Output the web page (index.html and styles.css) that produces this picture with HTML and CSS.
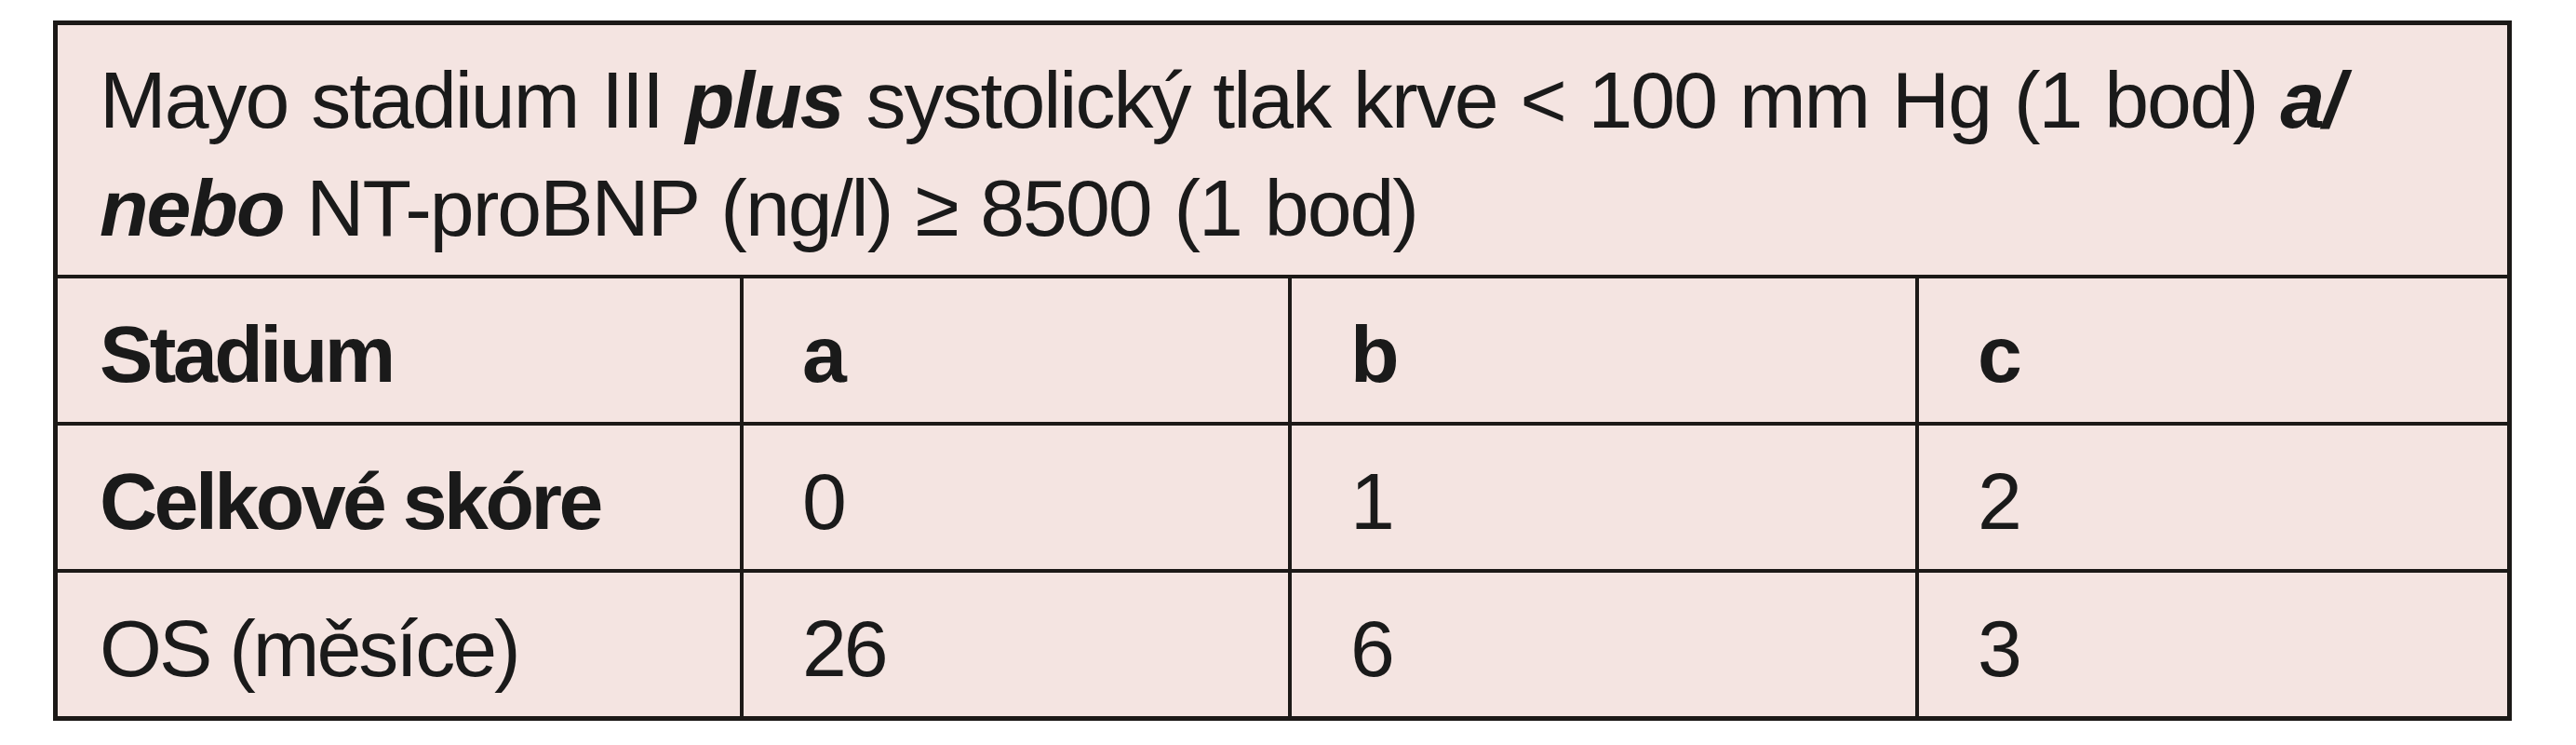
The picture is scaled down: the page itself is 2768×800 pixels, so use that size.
FILE: index.html
```html
<!DOCTYPE html>
<html lang="cs">
<head>
<meta charset="utf-8">
<title>Mayo stadium III</title>
<link rel="stylesheet" href="styles.css">
</head>
<body>
<table class="staging">
  <colgroup>
    <col class="col-label">
    <col class="col-a">
    <col class="col-b">
    <col class="col-c">
  </colgroup>
  <thead>
    <tr>
      <th class="intro" colspan="4">Mayo stadium III <em>plus</em> systolický tlak krve &lt; 100 mm Hg (1 bod) <em>a/<wbr>nebo</em> NT-proBNP (ng/l) ≥ 8500 (1 bod)</th>
    </tr>
  </thead>
  <tbody>
    <tr class="row-head">
      <th class="label">Stadium</th>
      <td class="strong">a</td>
      <td class="strong">b</td>
      <td class="strong last">c</td>
    </tr>
    <tr class="row-score">
      <th class="label">Celkové skóre</th>
      <td>0</td>
      <td>1</td>
      <td class="last">2</td>
    </tr>
    <tr class="row-os">
      <th class="label plain">OS (měsíce)</th>
      <td>26</td>
      <td>6</td>
      <td class="last">3</td>
    </tr>
  </tbody>
</table>
</body>
</html>
```

FILE: styles.css
```css
html, body {
  margin: 0;
  padding: 0;
  background: #ffffff;
}

body {
  font-family: "Liberation Sans", Arial, sans-serif;
  color: #1a1a1a;
}

.staging {
  margin: 22px 0 0 57px;
  width: 2642px;
  table-layout: fixed;
  border-collapse: separate;
  border-spacing: 0;
  border: 5px solid #1c1917;
  background: #f4e4e1;
  font-size: 86px;
  line-height: 116px;
}

.col-label { width: 737px; }
.col-a { width: 589px; }
.col-b { width: 674px; }
.col-c { width: 632px; }

.intro {
  text-align: left;
  font-weight: normal;
  padding: 22px 45px 14px 45px;
  border-bottom: 4px solid #1c1917;
  letter-spacing: -2px;
  word-spacing: 3px;
}

.intro em {
  font-weight: bold;
  font-style: italic;
}

.staging tbody th,
.staging tbody td {
  text-align: left;
  padding: 23px 20px 15px 63px;
  border-right: 4px solid #1c1917;
  border-bottom: 4px solid #1c1917;
  white-space: nowrap;
  vertical-align: top;
}

.staging tbody td {
  font-weight: normal;
  letter-spacing: -3px;
}

.staging tbody th.label {
  padding-left: 45px;
  font-weight: bold;
  letter-spacing: -3.5px;
}

.staging tbody th.label.plain {
  font-weight: normal;
  letter-spacing: -3px;
}

.staging tbody td.strong {
  font-weight: bold;
  letter-spacing: -3.5px;
}

.staging tbody td.last {
  border-right: none;
}

.staging tbody tr:last-child th,
.staging tbody tr:last-child td {
  border-bottom: none;
}
```
